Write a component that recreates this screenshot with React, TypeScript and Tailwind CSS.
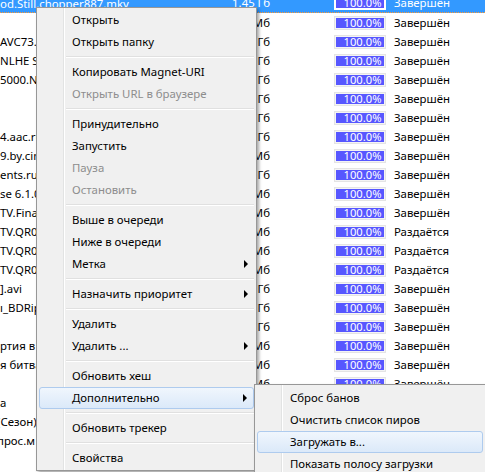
import React from "react";

type Row = { name: string; size: string; status: string; sel?: boolean; shift?: boolean };

const rows: Row[] = [
  { name: "od.Still.chopper887.mkv", size: "1.45 Гб", status: "Завершён", sel: true },
  { name: "", size: "699 Мб", status: "Завершён" },
  { name: "AVC73.Rip.mkv", size: "2.18 Гб", status: "Завершён" },
  { name: "NLHE Sit.Go", size: "1.37 Гб", status: "Завершён" },
  { name: "5000.NL.avi", size: "4.36 Гб", status: "Завершён" },
  { name: "", size: "1.09 Гб", status: "Завершён" },
  { name: "", size: "2.24 Гб", status: "Завершён" },
  { name: "4.aac.ru", size: "1.46 Гб", status: "Завершён" },
  { name: "9.by.cinema", size: "734 Мб", status: "Завершён" },
  { name: "ents.ru]", size: "1.55 Гб", status: "Завершён" },
  { name: "se 6.1.0", size: "241 Мб", status: "Завершён" },
  { name: "TV.Final", size: "350 Мб", status: "Завершён" },
  { name: "TV.QR01", size: "350 Мб", status: "Раздаётся" },
  { name: "TV.QR02", size: "351 Мб", status: "Раздаётся" },
  { name: "TV.QR05", size: "349 Мб", status: "Раздаётся" },
  { name: "].avi", size: "1.36 Гб", status: "Завершён" },
  { name: "ı_BDRip", size: "2.05 Гб", status: "Завершён" },
  { name: "", size: "1.12 Гб", status: "Завершён" },
  { name: "ртия в", size: "700 Мб", status: "Завершён" },
  { name: "я битва", size: "698 Мб", status: "Завершён" },
  { name: "", size: "745 Мб", status: "Завершён" },
  { name: "а", size: "1.37 Гб", status: "Завершён" },
  { name: "(Сезон)", size: "5.12 Гб", status: "Завершён", shift: true },
  { name: "прос.м", size: "512 Мб", status: "Завершён", shift: true },
  { name: "", size: "1.40 Гб", status: "Завершён" },
  { name: "", size: "1.40 Гб", status: "Завершён" },
];

type Item = { t: string; d?: boolean; sub?: boolean; hl?: boolean } | "sep";

const mainItems: Item[] = [
  { t: "Открыть" },
  { t: "Открыть папку" },
  "sep",
  { t: "Копировать Magnet-URI" },
  { t: "Открыть URL в браузере", d: true },
  "sep",
  { t: "Принудительно" },
  { t: "Запустить" },
  { t: "Пауза", d: true },
  { t: "Остановить", d: true },
  "sep",
  { t: "Выше в очереди" },
  { t: "Ниже в очереди" },
  { t: "Метка", sub: true },
  "sep",
  { t: "Назначить приоритет", sub: true },
  "sep",
  { t: "Удалить" },
  { t: "Удалить ...", sub: true },
  "sep",
  { t: "Обновить хеш" },
  { t: "Дополнительно", sub: true, hl: true },
  "sep",
  { t: "Обновить трекер" },
  "sep",
  { t: "Свойства" },
];

const subItems: Item[] = [
  { t: "Сброс банов" },
  { t: "Очистить список пиров" },
  { t: "Загружать в...", hl: true },
  { t: "Показать полосу загрузки" },
];

function MenuItems({ items }: { items: Item[] }) {
  return (
    <>
      {items.map((it, i) =>
        it === "sep" ? (
          <div key={i} className="relative h-[8px] flex flex-col justify-center pl-[27px]">
            <div className="h-px bg-[#e0e0e0]" />
            <div className="h-px bg-white" />
          </div>
        ) : (
          <div
            key={i}
            className={
              "relative h-[22px] flex items-center whitespace-nowrap " +
              (it.hl
                ? "rounded-[3px] border border-[#aecbee] bg-gradient-to-b from-[#f0f6fd] to-[#dbe9f9] pl-[32px]"
                : "pl-[33px]") +
              (it.d ? " text-[#8d8d8d]" : " text-black")
            }
          >
            <span>{it.t}</span>
            {it.sub && (
              <span className="absolute right-[6px] top-1/2 -translate-y-1/2 w-0 h-0 border-y-[4px] border-y-transparent border-l-[4px] border-l-black" />
            )}
          </div>
        )
      )}
    </>
  );
}

export default function App() {
  return (
    <div className="relative w-[485px] h-[472px] overflow-hidden bg-white text-[11.4px] leading-none font-['Noto_Sans','DejaVu_Sans',sans-serif] text-black">
      {/* Torrent list */}
      <div className="flex flex-col mt-[-6px]">
        {rows.map((r, i) => (
          <div
            key={i}
            className={
              "flex items-center h-[19px] shrink-0 whitespace-nowrap " +
              (r.sel ? "bg-[#3399ff] text-white border-b border-dotted border-b-[#ff9a33]" : "")
            }
          >
            <div className="w-[205px] overflow-hidden leading-[17px]">
              <span className={r.shift ? "ml-[-3px]" : ""}>{r.name}</span>
            </div>
            <div className="w-[65px] text-right">{r.size}</div>
            <div
              className={
                "ml-[64px] w-[52px] h-[14px] border p-px " +
                (r.sel ? "border-white bg-white" : "border-[#e4e4e4] bg-[#f4f4f4]")
              }
            >
              <div className="w-full h-full bg-[#5757ff] text-white flex items-center justify-center pl-[5px] text-[11.2px]">
                100.0%
              </div>
            </div>
            <div className="ml-[8px]">{r.status}</div>
          </div>
        ))}
      </div>

      {/* Main context menu */}
      <div className="absolute left-[36px] top-[7px] w-[221px] border border-[#979797] bg-[#f0f0f0] px-[2px] py-px shadow-[2px_2px_3px_rgba(0,0,0,0.35)]">
        <div className="absolute left-[26px] top-0 bottom-0 w-px bg-[#e2e3e3]" />
        <div className="absolute left-[27px] top-0 bottom-0 w-px bg-white" />
        <MenuItems items={mainItems} />
      </div>

      {/* Submenu */}
      <div className="absolute left-[254px] top-[384px] w-[232px] border border-[#979797] bg-[#f0f0f0] px-[2px] py-[2px] shadow-[2px_2px_3px_rgba(0,0,0,0.35)]">
        <div className="absolute left-[26px] top-0 bottom-0 w-px bg-[#e2e3e3]" />
        <div className="absolute left-[27px] top-0 bottom-0 w-px bg-white" />
        <MenuItems items={subItems} />
      </div>
    </div>
  );
}
